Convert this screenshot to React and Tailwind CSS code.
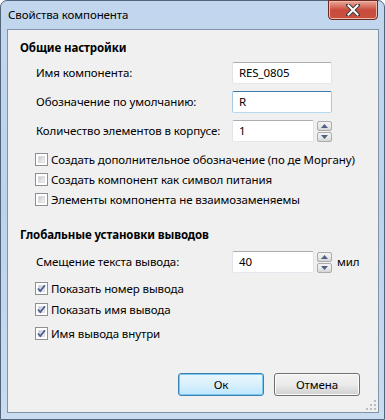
import React from "react";

const font = { fontFamily: '"Noto Sans", "Open Sans", sans-serif' };

const TextBox = ({ value, width = "w-[100px]", hover }) => (
  <div
    className={
      width +
      " h-[22px] bg-white rounded-[2px] border flex items-center pl-[6px] text-black " +
      (hover
        ? "border-t-[#3d7bad] border-x-[#a4c9e3] border-b-[#b7d9ed]"
        : "border-t-[#abadb3] border-x-[#e2e3ea] border-b-[#e3e9ef]")
    }
  >
    {value}
  </div>
);

const SpinBtn = ({ up }) => (
  <div className="w-[15px] h-[10px] rounded-[2px] border border-[#acacac] bg-gradient-to-b from-[#f2f2f2] via-[#ebebeb] to-[#d4d4d4] flex items-center justify-center">
    <svg width="7" height="4" viewBox="0 0 7 4">
      {up ? (
        <path d="M0 4 L3.5 0 L7 4 Z" fill="#4d6185" />
      ) : (
        <path d="M0 0 L3.5 4 L7 0 Z" fill="#4d6185" />
      )}
    </svg>
  </div>
);

const Spinner = () => (
  <div className="flex flex-col gap-[1px] ml-[3px]">
    <SpinBtn up />
    <SpinBtn />
  </div>
);

const Check = ({ checked, label }) => (
  <div className="flex items-center h-[13px] pl-[27px]">
    <div className="w-[13px] h-[13px] border border-[#8e8f8f] bg-white p-[2px] relative shrink-0">
      <div className="w-full h-full bg-gradient-to-br from-[#c6cad1] to-[#f4f4f4] border border-[#dcdde0]" />
      {checked && (
        <svg className="absolute left-0 top-0" width="11" height="11" viewBox="0 0 11 11">
          <path d="M2 5.5 L4.3 8 L9 2.2" stroke="#4a5f97" strokeWidth="1.8" fill="none" />
        </svg>
      )}
    </div>
    <span className="ml-[3px] leading-[13px] text-black whitespace-nowrap">{label}</span>
  </div>
);

const Row = ({ label, children, className = "" }) => (
  <div className={"flex items-center pl-[28px] " + className}>
    <span className="w-[196px] text-black whitespace-nowrap">{label}</span>
    {children}
  </div>
);

const WinButton = ({ children, primary }) => (
  <div
    className={
      "w-[86px] h-[23px] rounded-[3px] border flex items-center justify-center text-black " +
      (primary
        ? "border-[#3c7fb1] bg-gradient-to-b from-[#eaf6fd] via-[#d9f0fc] to-[#bee6fd] shadow-[inset_0_0_0_1px_#7dc8f0]"
        : "border-[#707070] bg-gradient-to-b from-[#f2f2f2] via-[#ebebeb] to-[#cfcfcf] shadow-[inset_0_0_0_1px_#fcfcfc]")
    }
  >
    {children}
  </div>
);

export default function App() {
  return (
    <div style={font} className="w-[385px] h-[420px] bg-white text-[11.5px] tracking-[-0.1px]">
      <div className="w-[385px] h-[420px] rounded-t-[7px] border border-[#52647a] bg-gradient-to-b from-[#c2d7ee] via-[#bcd3ec] to-[#c9dcf0] flex flex-col">
        <div className="h-[28px] flex justify-between">
          <div className="pl-[7px] pt-[6px] text-black leading-[16px]">Свойства компонента</div>
          <div className="mr-[6px] -mt-[1px] w-[50px] h-[20px] rounded-b-[4px] border border-[#6b2a22] bg-gradient-to-b from-[#e9a99b] via-[#c94a3c] to-[#c9503e] flex items-center justify-center shadow-[inset_0_0_0_1px_#f0b7ab]">
            <svg width="14" height="12" viewBox="0 0 14 12">
              <path d="M2 1 L12 11 M12 1 L2 11" stroke="#3b3b3b" strokeWidth="4" strokeLinecap="square" />
              <path d="M2.5 1.5 L11.5 10.5 M11.5 1.5 L2.5 10.5" stroke="#ffffff" strokeWidth="2" strokeLinecap="square" />
            </svg>
          </div>
        </div>
        <div className="ml-[6px] w-[372px] h-[384px] border border-[#8093a8] bg-[#f0f0f0] flex flex-col relative">
          <div className="mt-[10px] pl-[12px] font-bold leading-[16px] text-black">Общие настройки</div>
          <Row label="Имя компонента:" className="mt-[6px]">
            <TextBox value="RES_0805" />
          </Row>
          <Row label="Обозначение по умолчанию:" className="mt-[7px]">
            <TextBox value="R" hover />
          </Row>
          <Row label="Количество элементов в корпусе:" className="mt-[7px]">
            <TextBox value="1" width="w-[82px]" />
            <Spinner />
          </Row>
          <div className="mt-[11px] flex flex-col gap-[7px]">
            <Check label="Создать дополнительное обозначение (по де Моргану)" />
            <Check label="Создать компонент как символ питания" />
            <Check label="Элементы компонента не взаимозаменяемы" />
          </div>
          <div className="mt-[21px] pl-[12px] font-bold leading-[16px] text-black">Глобальные установки выводов</div>
          <Row label="Смещение текста вывода:" className="mt-[8px]">
            <TextBox value="40" width="w-[82px]" />
            <Spinner />
            <span className="ml-[5px] text-black">мил</span>
          </Row>
          <div className="mt-[9px] flex flex-col">
            <Check checked label="Показать номер вывода" />
            <div className="mt-[8px]">
              <Check checked label="Показать имя вывода" />
            </div>
            <div className="mt-[11px]">
              <Check checked label="Имя вывода внутри" />
            </div>
          </div>
          <div className="mt-[33px] flex justify-end gap-[10px] pr-[18px]">
            <WinButton primary>Ок</WinButton>
            <WinButton>Отмена</WinButton>
          </div>
          <svg className="absolute right-[2px] bottom-[2px]" width="11" height="11" viewBox="0 0 11 11">
            {[[9, 1], [9, 5], [5, 5], [9, 9], [5, 9], [1, 9]].map(([x, y], i) => (
              <rect key={i} x={x} y={y} width="2" height="2" fill="#b8bcc4" />
            ))}
          </svg>
        </div>
      </div>
    </div>
  );
}
